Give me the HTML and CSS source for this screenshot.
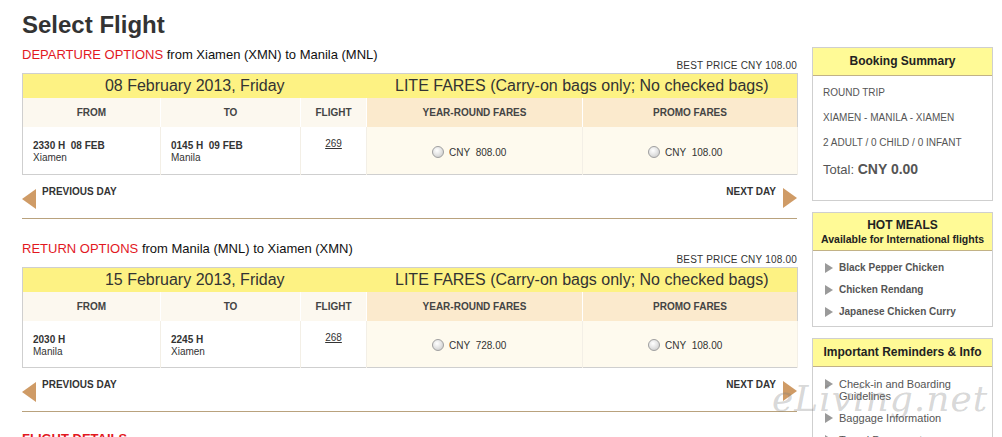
FILE: index.html
```html
<!DOCTYPE html>
<html lang="en">
<head>
    <meta charset="UTF-8">
    <title>Select Flight</title>
    <link rel="stylesheet" href="styles.css">
</head>
<body>
    <div class="page">
        <div class="main">
            <h1>Select Flight</h1>

            <div class="option">
                <div class="opt-title"><span class="red">DEPARTURE OPTIONS</span> from Xiamen (XMN) to Manila (MNL)</div>
                <div class="best-price">BEST PRICE CNY 108.00</div>
                <table class="fares">
                    <colgroup>
                        <col class="c-from"><col class="c-to"><col class="c-flight"><col class="c-year"><col class="c-promo">
                    </colgroup>
                    <tr class="date-row">
                        <td colspan="3">08 February 2013, Friday</td>
                        <td colspan="2">LITE FARES (Carry-on bags only; No checked bags)</td>
                    </tr>
                    <tr class="head-row">
                        <th>FROM</th>
                        <th>TO</th>
                        <th>FLIGHT</th>
                        <th class="fare-head">YEAR-ROUND FARES</th>
                        <th class="fare-head">PROMO FARES</th>
                    </tr>
                    <tr class="data-row">
                        <td class="place"><b>2330 H&nbsp; 08 FEB</b><br>Xiamen</td>
                        <td class="place"><b>0145 H&nbsp; 09 FEB</b><br>Manila</td>
                        <td class="flight"><a href="#">269</a></td>
                        <td class="fare"><span class="radio"></span>CNY&nbsp; 808.00</td>
                        <td class="fare"><span class="radio"></span>CNY&nbsp; 108.00</td>
                    </tr>
                </table>
                <div class="day-nav">
                    <a class="prev" href="#"><span class="arrow-left"></span>PREVIOUS DAY</a>
                    <a class="next" href="#">NEXT DAY<span class="arrow-right"></span></a>
                </div>
            </div>

            <div class="option">
                <div class="opt-title"><span class="red">RETURN OPTIONS</span> from Manila (MNL) to Xiamen (XMN)</div>
                <div class="best-price">BEST PRICE CNY 108.00</div>
                <table class="fares">
                    <colgroup>
                        <col class="c-from"><col class="c-to"><col class="c-flight"><col class="c-year"><col class="c-promo">
                    </colgroup>
                    <tr class="date-row">
                        <td colspan="3">15 February 2013, Friday</td>
                        <td colspan="2">LITE FARES (Carry-on bags only; No checked bags)</td>
                    </tr>
                    <tr class="head-row">
                        <th>FROM</th>
                        <th>TO</th>
                        <th>FLIGHT</th>
                        <th class="fare-head">YEAR-ROUND FARES</th>
                        <th class="fare-head">PROMO FARES</th>
                    </tr>
                    <tr class="data-row">
                        <td class="place"><b>2030 H</b><br>Manila</td>
                        <td class="place"><b>2245 H</b><br>Xiamen</td>
                        <td class="flight"><a href="#">268</a></td>
                        <td class="fare"><span class="radio"></span>CNY&nbsp; 728.00</td>
                        <td class="fare"><span class="radio"></span>CNY&nbsp; 108.00</td>
                    </tr>
                </table>
                <div class="day-nav">
                    <a class="prev" href="#"><span class="arrow-left"></span>PREVIOUS DAY</a>
                    <a class="next" href="#">NEXT DAY<span class="arrow-right"></span></a>
                </div>
            </div>

            <div class="option details">
                <div class="opt-title"><span class="red bold">FLIGHT DETAILS</span></div>
            </div>
        </div>

        <div class="sidebar">
            <div class="box">
                <div class="box-head">Booking Summary</div>
                <div class="summary">
                    <p>ROUND TRIP</p>
                    <p>XIAMEN - MANILA - XIAMEN</p>
                    <p>2 ADULT / 0 CHILD / 0 INFANT</p>
                    <p class="total">Total: <b>CNY 0.00</b></p>
                </div>
            </div>

            <div class="box">
                <div class="box-head tall">HOT MEALS<small>Available for International flights</small></div>
                <ul class="links meals">
                    <li>Black Pepper Chicken</li>
                    <li>Chicken Rendang</li>
                    <li>Japanese Chicken Curry</li>
                </ul>
            </div>

            <div class="box">
                <div class="box-head">Important Reminders &amp; Info</div>
                <ul class="links info">
                    <li>Check-in and Boarding Guidelines</li>
                    <li>Baggage Information</li>
                    <li>Travel Documents</li>
                </ul>
            </div>
        </div>
    </div>

    <div class="watermark">eLiving.net</div>
</body>
</html>
```

FILE: styles.css
```css
body {
    margin: 0;
    padding: 0;
    background: #fff;
    font-family: "Liberation Sans", Arial, sans-serif;
    color: #333;
    overflow: hidden;
}

.page {
    display: flex;
    align-items: flex-start;
    padding-left: 22px;
}

.main {
    width: 775px;
}

h1 {
    margin: 0;
    padding-top: 10px;
    font-size: 24px;
    line-height: 30px;
    font-weight: bold;
    color: #333;
}

.option {
    margin-top: 7px;
}

.option + .option {
    margin-top: 22px;
}

.option.details {
    margin-top: 19px;
}

.opt-title {
    font-size: 13px;
    line-height: 15px;
    color: #111;
}

.red {
    color: #e2181f;
}

.bold {
    font-weight: bold;
}

.best-price {
    margin-top: -2px;
    text-align: right;
    font-size: 10px;
    line-height: 12px;
    letter-spacing: 0.2px;
    color: #333;
}

.fares {
    width: 775px;
    margin-top: 1px;
    border-collapse: collapse;
    table-layout: fixed;
    border: 1px solid #cfcfcf;
}

.c-from { width: 138px; }
.c-to { width: 140px; }
.c-flight { width: 66px; }
.c-year { width: 216px; }
.c-promo { width: 215px; }

.date-row td {
    height: 24px;
    padding: 0;
    background: #fdf283;
    text-align: center;
    font-size: 16px;
    color: #333;
}

.head-row th {
    height: 29px;
    padding: 0;
    background: #fcf8ef;
    border-right: 1px solid #fff;
    font-size: 10px;
    font-weight: bold;
    color: #444;
}

.head-row th.fare-head {
    background: #fbeacd;
}

.head-row th:last-child {
    border-right: none;
}

.data-row {
    height: 47px;
}

.data-row td {
    padding: 0;
    font-size: 10px;
    line-height: 12px;
    color: #333;
    border-right: 1px solid #f3efe6;
    vertical-align: top;
}

.data-row td.place {
    padding: 13px 0 0 10px;
    background: #fff;
}

.data-row td.flight {
    padding-top: 11px;
    text-align: center;
    background: #fff;
}

.flight a {
    color: #333;
}

.data-row td.fare {
    padding: 4px 0 0 65px;
    vertical-align: middle;
    background: #fefaee;
}

.radio {
    display: inline-block;
    width: 10px;
    height: 10px;
    margin-right: 5px;
    vertical-align: -2px;
    border: 1px solid #a0a0a0;
    border-radius: 50%;
    background: radial-gradient(circle at 40% 35%, #fff 0, #e6e6e6 45%, #c4c4c4 100%);
}

.day-nav {
    display: flex;
    justify-content: space-between;
    align-items: flex-start;
    height: 32px;
    padding-top: 11px;
    border-bottom: 1px solid #b9a27d;
}

.day-nav a {
    display: flex;
    align-items: flex-start;
    font-size: 10px;
    line-height: 12px;
    font-weight: bold;
    color: #333;
    text-decoration: none;
}

.arrow-left {
    width: 0;
    height: 0;
    margin: 3px 6px 0 0;
    border-top: 10px solid transparent;
    border-bottom: 10px solid transparent;
    border-right: 14px solid #cf9b66;
}

.arrow-right {
    width: 0;
    height: 0;
    margin: 2px 0 0 7px;
    border-top: 10px solid transparent;
    border-bottom: 10px solid transparent;
    border-left: 14px solid #cf9b66;
}

.sidebar {
    width: 181px;
    margin: 47px 0 0 15px;
}

.box {
    border: 1px solid #cfcfcf;
    margin-bottom: 11px;
}

.box-head {
    height: 27px;
    background: #fffa96;
    border-bottom: 1px solid #c2b286;
    text-align: center;
    font-size: 12px;
    line-height: 27px;
    font-weight: bold;
    color: #222;
}

.box-head.tall {
    height: auto;
    padding: 5px 0 4px;
    line-height: 14px;
}

.box-head small {
    display: block;
    font-size: 10.5px;
    line-height: 14px;
}

.summary {
    padding: 10px 10px 22px;
}

.summary p {
    margin: 0 0 11px;
    font-size: 10px;
    line-height: 14px;
    color: #555;
}

.summary p.total {
    margin: 0;
    font-size: 13px;
    line-height: 16px;
}

.summary .total b {
    font-size: 14px;
}

.links {
    list-style: none;
    margin: 0;
    padding: 11px 8px 8px 12px;
}

.links li {
    position: relative;
    padding-left: 14px;
    margin-bottom: 10px;
    font-size: 10px;
    line-height: 12px;
    font-weight: bold;
    color: #555;
}

.links li:last-child {
    margin-bottom: 0;
}

.links li::before {
    content: "";
    position: absolute;
    left: 0;
    top: 1px;
    border-top: 5px solid transparent;
    border-bottom: 5px solid transparent;
    border-left: 8px solid #9a9a9a;
}

.info {
    padding-top: 11px;
}

.info li {
    font-weight: normal;
    font-size: 11px;
}

.watermark {
    position: absolute;
    left: 772px;
    top: 378px;
    font-family: "DejaVu Serif", serif;
    font-style: italic;
    font-size: 36px;
    color: rgba(120, 120, 120, 0.3);
    letter-spacing: 1px;
}
```
